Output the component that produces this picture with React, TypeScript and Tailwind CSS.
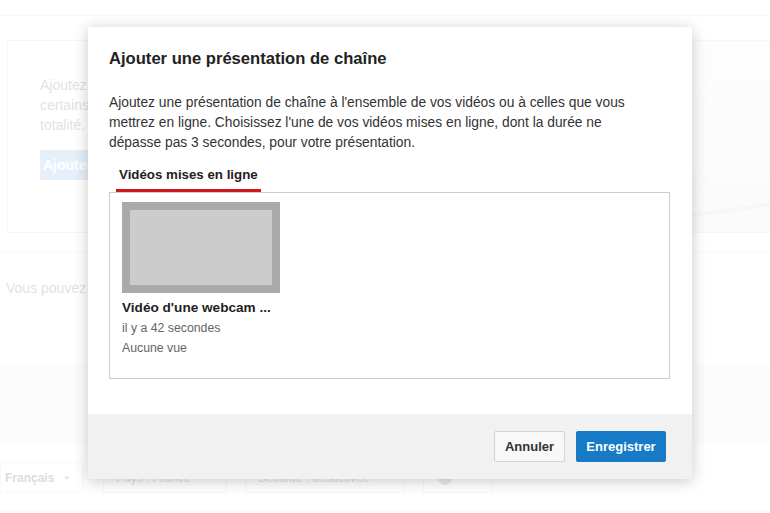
import { ChevronDown } from "lucide-react";

const font = { fontFamily: '"Liberation Sans", Arial, sans-serif' };

function BackgroundPage() {
  return (
    <div className="w-[770px] h-[513px] bg-white overflow-hidden text-[#333]" style={font}>
      <div className="h-[16px] border-b border-[#e8e8e8]" />

      {/* Trailer card (mostly hidden by the dialog) */}
      <div className="mt-[24px] ml-[7px] h-[193px] flex border border-[#e3e3e3]">
        <div className="flex-1 pl-[32px] pt-[34px]">
          <div className="w-[49px] overflow-hidden whitespace-nowrap">
            <p className="text-[14px] leading-[20px] text-[#999]">
              Ajoutez une présentation
              <br />
              certains visiteurs
              <br />
              totalité.
            </p>
            <div className="mt-[15px] flex h-[30px] items-center px-[3px] bg-[#a9cdef] text-white text-[14px] font-bold">
              Ajouter
            </div>
          </div>
        </div>
        <div className="w-[77px] bg-gradient-to-b from-[#f9f9f9] to-[#f0f0f0] flex items-end pb-[20px]">
          <div className="h-[4px] w-full bg-[#e4e4e4] rotate-[-8deg]" />
        </div>
      </div>

      <div className="mt-[19px] h-px bg-[#eeeeee]" />
      <div className="mt-[26px] ml-[6px] w-[82px] overflow-hidden whitespace-nowrap text-[14px] leading-[18px] text-[#999]">
        Vous pouvez également
      </div>

      <div className="mt-[67px] h-[80px] bg-[#f4f4f4]" />

      {/* Bottom options row */}
      <div className="mt-[18px] flex items-center h-[31px] text-[12px] text-[#999]">
        <div className="w-[84px] h-[31px] border border-[#e6e6e6] flex items-center pl-[4px] gap-[8px] font-bold text-[#888]">
          Français
          <ChevronDown className="w-[10px] h-[10px] text-[#999]" fill="#999" />
        </div>
        <div className="ml-[19px] w-[124px] h-[31px] border border-[#e6e6e6] flex items-center pl-[12px]">
          Pays : France
        </div>
        <div className="ml-[18px] w-[160px] h-[31px] border border-[#e6e6e6] flex items-center pl-[12px]">
          Sécurité : désactivée
        </div>
        <div className="ml-[18px] w-[70px] h-[31px] border border-[#e6e6e6] flex items-center pl-[14px]">
          <div className="w-[14px] h-[14px] rounded-full bg-[#bbb]" />
        </div>
      </div>
      <div className="mt-[18px] h-px bg-[#eeeeee]" />
    </div>
  );
}

export default function App() {
  return (
    <div className="relative w-[770px] h-[513px] overflow-hidden" style={font}>
      <BackgroundPage />
      <div className="absolute inset-0 bg-white/70" />

      {/* Dialog */}
      <div className="absolute left-[88px] top-[27px] w-[604px] h-[452px] bg-white shadow-[0_2px_14px_rgba(0,0,0,0.22)] flex flex-col">
        <div className="flex-1 pl-[21px] pr-[22px] pt-[22px]">
          <h2 className="text-[16.6px] leading-[20px] font-bold text-[#222]">
            Ajouter une présentation de chaîne
          </h2>
          <p className="mt-[24px] text-[13.8px] leading-[20px] text-[#333] whitespace-nowrap">
            Ajoutez une présentation de chaîne à l'ensemble de vos vidéos ou à celles que vous
            <br />
            mettrez en ligne. Choisissez l'une de vos vidéos mises en ligne, dont la durée ne
            <br />
            dépasse pas 3 secondes, pour votre présentation.
          </p>

          <div className="mt-[12px] flex">
            <div className="ml-[7px] px-[3px] pb-[4px] border-b-[3px] border-[#cc181e] text-[13.3px] leading-[20px] font-bold text-[#222]">
              Vidéos mises en ligne
            </div>
          </div>

          <div className="h-[187px] border border-[#cccccc] pl-[12px] pt-[9px]">
            <div className="w-[158px]">
              <div className="h-[91px] border-[8px] border-[#aaaaaa] bg-[#cccccc]" />
              <div className="mt-[5px] text-[13.6px] leading-[20px] font-bold text-[#222] whitespace-nowrap">
                Vidéo d'une webcam ...
              </div>
              <div className="text-[12.3px] leading-[20px] text-[#666]">il y a 42 secondes</div>
              <div className="text-[12.3px] leading-[20px] text-[#666]">Aucune vue</div>
            </div>
          </div>
        </div>

        <div className="h-[65px] bg-[#f1f1f1] flex items-center justify-end gap-[11px] pr-[26px]">
          <button className="h-[31px] w-[71px] rounded-[2px] border border-[#d3d3d3] bg-[#f8f8f8] text-[13px] font-bold text-[#333]">
            Annuler
          </button>
          <button className="h-[31px] w-[90px] rounded-[2px] bg-[#167ac6] text-[13px] font-bold text-white">
            Enregistrer
          </button>
        </div>
      </div>
    </div>
  );
}
